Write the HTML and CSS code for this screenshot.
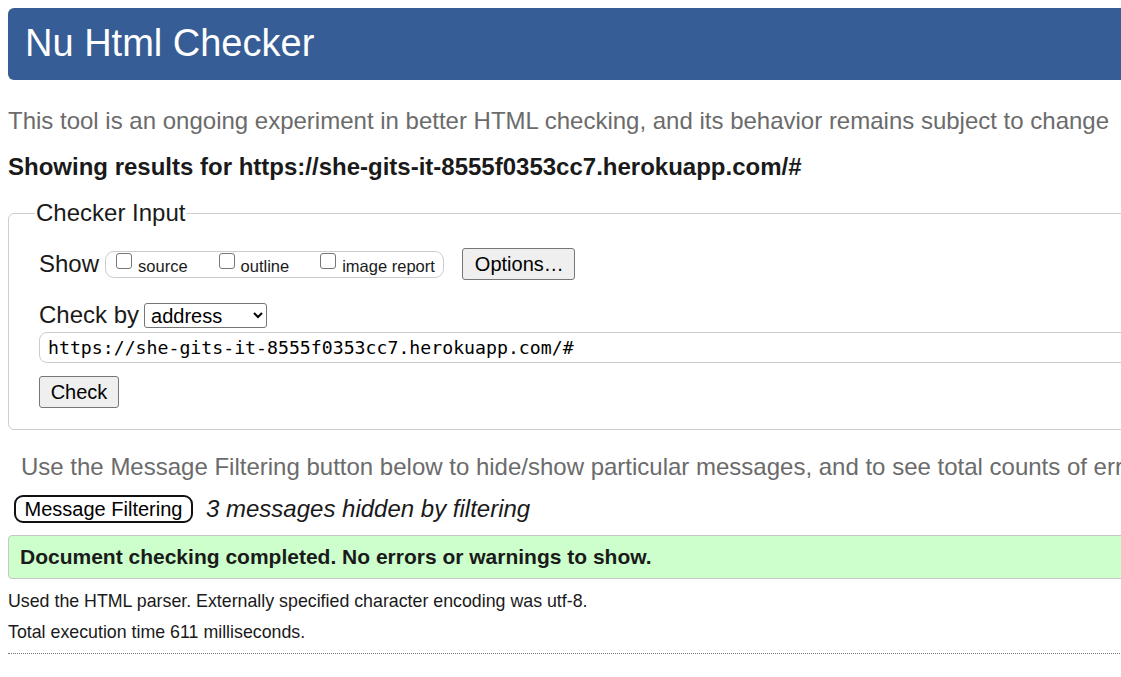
FILE: index.html
```html
<!DOCTYPE html>
<html lang="en">
<head>
<meta charset="utf-8">
<title>Nu Html Checker</title>
<link rel="stylesheet" href="styles.css">
</head>
<body>
<div class="page">
  <h1 class="banner">Nu Html Checker</h1>
  <p class="tagline">This tool is an ongoing experiment in better HTML checking, and its behavior remains subject to change</p>
  <p class="results-for">Showing results for https://she-gits-it-8555f0353cc7.herokuapp.com/#</p>

  <fieldset class="checker">
    <legend class="checker-legend">Checker Input</legend>
    <div class="show-row">
      <span class="big-label">Show</span>
      <span class="show-group">
        <label class="opt"><input class="cb" type="checkbox"> source</label>
        <label class="opt"><input class="cb" type="checkbox"> outline</label>
        <label class="opt"><input class="cb" type="checkbox"> image report</label>
      </span>
      <button class="btn btn-options" type="button">Options…</button>
    </div>
    <div class="checkby-row">
      <span class="big-label">Check by</span>
      <select class="select">
        <option>address</option>
      </select>
    </div>
    <div class="url-row">
      <input class="url" type="text" value="https://she-gits-it-8555f0353cc7.herokuapp.com/#">
    </div>
    <div class="submit-row">
      <button class="btn btn-check" type="button">Check</button>
    </div>
  </fieldset>

  <p class="filter-hint">Use the Message Filtering button below to hide/show particular messages, and to see total counts of errors and warnings.</p>
  <div class="filter-row">
    <button class="btn-filter" type="button">Message Filtering</button>
    <span class="hidden-count">3 messages hidden by filtering</span>
  </div>

  <p class="success">Document checking completed. No errors or warnings to show.</p>
  <p class="details">Used the HTML parser. Externally specified character encoding was utf-8.</p>
  <p class="details">Total execution time 611 milliseconds.</p>
  <hr class="rule">
</div>
</body>
</html>
```

FILE: styles.css
```css
html {
  overflow: hidden;
}
body {
  margin: 8px 0 8px 8px;
  font-family: "Liberation Sans", Arial, sans-serif;
  color: #1a1a1a;
  background: #fff;
  overflow: hidden;
}
.page {
  width: 1400px;
}
.banner {
  margin: 0;
  height: 72px;
  box-sizing: border-box;
  padding: 12px 0 0 17px;
  background: #365d95;
  color: #fff;
  font-size: 38px;
  font-weight: normal;
  line-height: 46px;
  border-radius: 6px 0 0 6px;
}
.tagline {
  margin: 27px 0 0 0;
  font-size: 24px;
  line-height: 28px;
  color: #6b6b6b;
}
.results-for {
  margin: 18px 0 0 0;
  font-size: 24px;
  line-height: 28px;
  font-weight: bold;
}
.checker {
  margin: 18px 0 0 0;
  padding: 21px 30px 21px 30px;
  border: 1px solid #cfcfcf;
  border-radius: 6px;
}
.checker-legend {
  font-size: 24px;
  padding: 0 1px;
  margin-left: -4px;
  line-height: 28px;
}
.big-label {
  font-size: 24px;
  line-height: 28px;
}
.show-row {
  display: flex;
  align-items: center;
}
.show-group {
  display: inline-flex;
  align-items: center;
  gap: 31px;
  margin-left: 6px;
  height: 27px;
  box-sizing: border-box;
  padding: 0 8px 0 10px;
  border: 1px solid #ccc;
  border-radius: 9px;
}
.opt {
  display: inline-flex;
  align-items: center;
  font-size: 16.5px;
  line-height: 18px;
  padding-top: 3px;
}
.cb {
  -webkit-appearance: none;
  appearance: none;
  margin: 0 6px 0 0;
  width: 16px;
  height: 16px;
  box-sizing: border-box;
  border: 1.5px solid #767676;
  border-radius: 3px;
  background: #fff;
  position: relative;
  top: -5px;
}
.btn {
  font-family: "Liberation Sans", Arial, sans-serif;
  font-size: 20px;
  color: #000;
  background: #efefef;
  border: 1px solid #767676;
  border-radius: 3px;
  padding: 0 12px;
}
.btn-options {
  margin-left: 18px;
  height: 32px;
  width: 113px;
}
.checkby-row {
  display: flex;
  align-items: center;
  margin-top: 21px;
}
.select {
  margin-left: 5px;
  width: 123px;
  height: 25px;
  font-family: "Liberation Sans", Arial, sans-serif;
  font-size: 20px;
  border: 1px solid #767676;
  border-radius: 3px;
  background: #fff;
  color: #000;
  padding: 0 0 0 2px;
}
.url-row {
  margin-top: 3px;
}
.url {
  display: block;
  width: 100%;
  box-sizing: border-box;
  height: 31px;
  border: 1px solid #ccc;
  border-radius: 8px;
  padding: 0 8px;
  font-family: "DejaVu Sans Mono", "Liberation Mono", monospace;
  font-size: 18.2px;
  color: #000;
}
.submit-row {
  margin-top: 13px;
}
.btn-check {
  width: 80px;
  height: 32px;
  padding: 0;
}
.filter-hint {
  margin: 23px 0 0 13px;
  font-size: 24px;
  line-height: 28px;
  color: #6b6b6b;
  white-space: nowrap;
}
.filter-row {
  display: flex;
  align-items: center;
  gap: 13px;
  margin: 14px 0 0 6px;
}
.btn-filter {
  height: 28px;
  width: 179px;
  padding: 0;
  font-family: "Liberation Sans", Arial, sans-serif;
  font-size: 20px;
  color: #000;
  background: #fff;
  border: 2px solid #111;
  border-radius: 9px;
}
.hidden-count {
  font-size: 24px;
  font-style: italic;
  line-height: 28px;
}
.success {
  margin: 12px 0 0 0;
  height: 44px;
  box-sizing: border-box;
  padding: 0 11px;
  display: flex;
  align-items: center;
  background: #ccffcc;
  border: 1px solid #c6c6c6;
  border-radius: 4px 0 0 4px;
  font-size: 21px;
  font-weight: bold;
}
.details {
  margin: 12px 0 0 0;
  font-size: 17.8px;
  line-height: 20px;
}
.details + .details {
  margin-top: 11px;
}
.rule {
  margin: 11px 0 0 0;
  border: 0;
  border-top: 1px dotted #777;
  height: 0;
}
```
